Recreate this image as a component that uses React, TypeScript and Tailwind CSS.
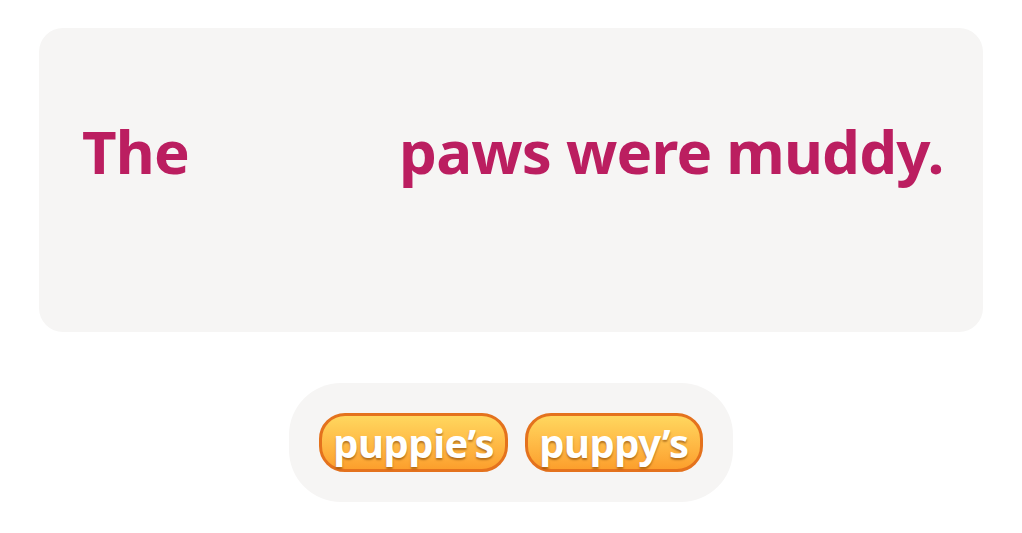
import React from "react";

const font = { fontFamily: '"Noto Sans", "DejaVu Sans", sans-serif' };

function Choice({ label }: { label: string }) {
  return (
    <button
      className="h-[59px] whitespace-nowrap rounded-[26px] border-[3px] border-[#e4721d] bg-gradient-to-b from-[#ffd75e] to-[#fc9f2c] px-[11px] text-[40px] leading-none font-bold tracking-[-0.5px] text-white [text-shadow:0_2px_2px_rgba(120,60,0,0.55)]"
      style={font}
    >
      {label}
    </button>
  );
}

export default function App() {
  return (
    <div className="min-h-[533px] w-full bg-white" style={font}>
      <div className="px-[39px] pt-[28px]">
        <div className="h-[304px] rounded-[24px] bg-[#f6f5f4] pl-[43px] pt-[80px]">
          <div className="flex items-baseline whitespace-nowrap text-[60px] font-bold leading-[86px] tracking-[-0.8px] text-[#bb1e60]">
            <span>The</span>
            <span className="inline-block w-[210px]" />
            <span>paws were muddy.</span>
          </div>
        </div>
      </div>
      <div className="flex justify-center pt-[51px]">
        <div className="flex h-[119px] items-center gap-[17px] rounded-[52px] bg-[#f6f5f4] px-[30px]">
          <Choice label="puppie’s" />
          <Choice label="puppy’s" />
        </div>
      </div>
    </div>
  );
}
